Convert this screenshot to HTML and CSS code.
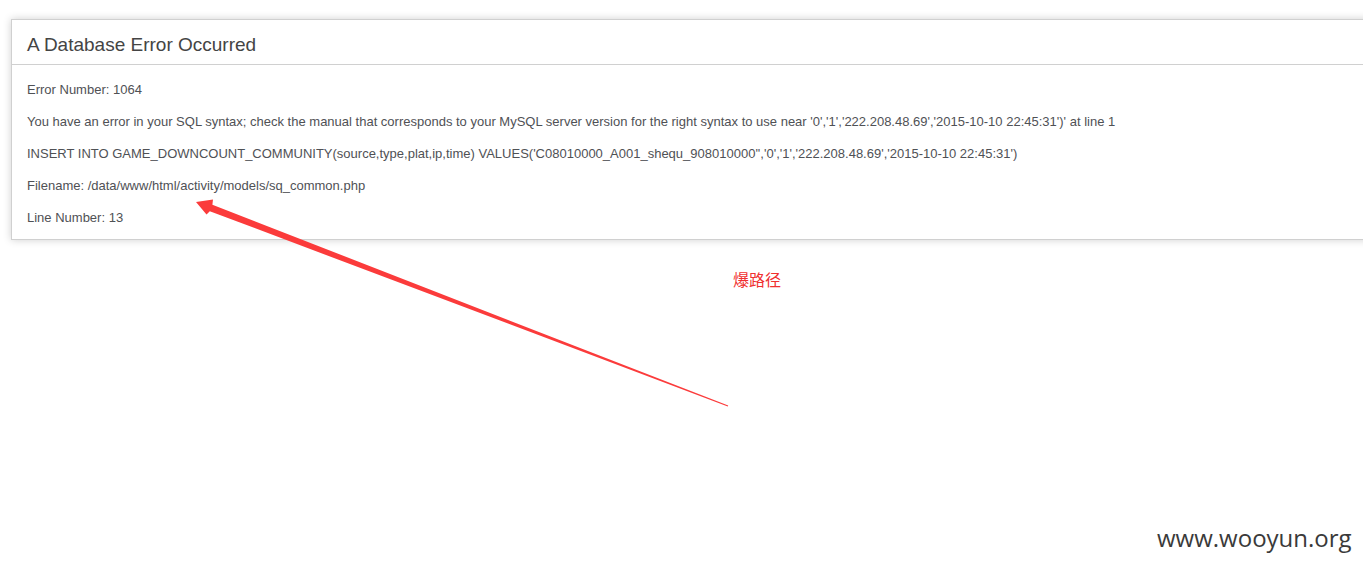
FILE: index.html
```html
<!DOCTYPE html>
<html lang="en">
<head>
<meta charset="utf-8">
<title>Database Error</title>
<link rel="stylesheet" href="styles.css">
</head>
<body>
<div class="container">
  <h1 class="title">A Database Error Occurred</h1>
  <p class="line">Error Number: 1064</p>
  <p class="line">You have an error in your SQL syntax; check the manual that corresponds to your MySQL server version for the right syntax to use near '0','1','222.208.48.69','2015-10-10 22:45:31')' at line 1</p>
  <p class="line">INSERT INTO GAME_DOWNCOUNT_COMMUNITY(source,type,plat,ip,time) VALUES('C08010000_A001_shequ_908010000'','0','1','222.208.48.69','2015-10-10 22:45:31')</p>
  <p class="line">Filename: /data/www/html/activity/models/sq_common.php</p>
  <p class="line">Line Number: 13</p>
</div>
<svg class="arrow" width="1363" height="567" viewBox="0 0 1363 567" aria-hidden="true">
  <polygon points="196,202 213,199.5 212.4,204.8 728.2,405.6 727.8,406.4 209.8,211.2 206.5,214.5" fill="#fb3b3b"/>
</svg>
<div class="note">爆路径</div>
<div class="watermark">www.wooyun.org</div>
</body>
</html>
```

FILE: styles.css
```css
html, body {
  margin: 0;
  padding: 0;
  overflow: hidden;
  background: #fff;
}
body {
  position: relative;
  width: 1363px;
  height: 567px;
  font-family: "Liberation Sans", Arial, sans-serif;
  font-size: 13px;
  color: #4f5155;
}
.container {
  margin: 19px -12px 0 11px;
  border: 1px solid #d0d0d0;
  box-shadow: 0 0 8px #d0d0d0;
  background: #fff;
}
.title {
  margin: 0 0 14px 0;
  padding: 15px 15px 9px 15px;
  font-size: 19px;
  line-height: 20px;
  font-weight: normal;
  color: #444;
  border-bottom: 1px solid #d0d0d0;
  background: transparent;
}
.line {
  margin: 11px 15px;
  padding-top: 1px;
  line-height: 20px;
}
.arrow {
  position: absolute;
  left: 0;
  top: 0;
}
.note {
  position: absolute;
  left: 733px;
  top: 269px;
  font-family: "Noto Sans CJK SC", sans-serif;
  font-size: 16px;
  line-height: 20px;
  color: #f03030;
}
.watermark {
  position: absolute;
  left: 1157px;
  top: 523px;
  font-family: "Open Sans", sans-serif;
  font-size: 24px;
  line-height: 30px;
  color: #3a3a3a;
}
```
